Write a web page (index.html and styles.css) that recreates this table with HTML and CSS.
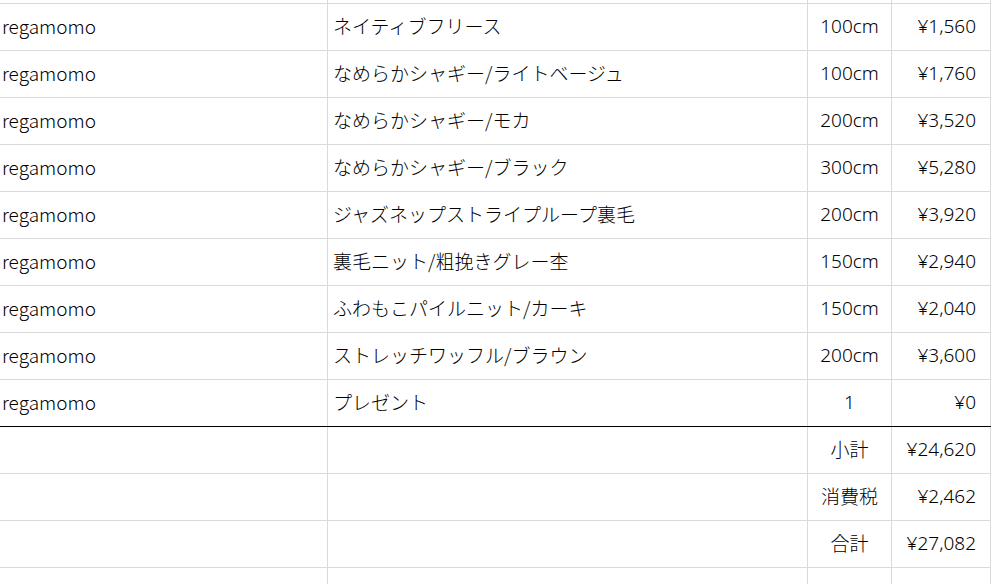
FILE: index.html
```html
<!DOCTYPE html>
<html lang="ja">
<head>
<meta charset="utf-8">
<link rel="stylesheet" href="styles.css">
</head>
<body>
<div class="sheet">
  <div class="row top"><div class="c c1"></div><div class="c c2"></div><div class="c c3"></div><div class="c c4"></div></div>
  <div class="row"><div class="c c1">regamomo</div><div class="c c2">ネイティブフリース</div><div class="c c3">100cm</div><div class="c c4">¥1,560</div></div>
  <div class="row"><div class="c c1">regamomo</div><div class="c c2">なめらかシャギー/ライトベージュ</div><div class="c c3">100cm</div><div class="c c4">¥1,760</div></div>
  <div class="row"><div class="c c1">regamomo</div><div class="c c2">なめらかシャギー/モカ</div><div class="c c3">200cm</div><div class="c c4">¥3,520</div></div>
  <div class="row"><div class="c c1">regamomo</div><div class="c c2">なめらかシャギー/ブラック</div><div class="c c3">300cm</div><div class="c c4">¥5,280</div></div>
  <div class="row"><div class="c c1">regamomo</div><div class="c c2">ジャズネップストライプループ裏毛</div><div class="c c3">200cm</div><div class="c c4">¥3,920</div></div>
  <div class="row"><div class="c c1">regamomo</div><div class="c c2">裏毛ニット/粗挽きグレー杢</div><div class="c c3">150cm</div><div class="c c4">¥2,940</div></div>
  <div class="row"><div class="c c1">regamomo</div><div class="c c2">ふわもこパイルニット/カーキ</div><div class="c c3">150cm</div><div class="c c4">¥2,040</div></div>
  <div class="row"><div class="c c1">regamomo</div><div class="c c2">ストレッチワッフル/ブラウン</div><div class="c c3">200cm</div><div class="c c4">¥3,600</div></div>
  <div class="row last"><div class="c c1">regamomo</div><div class="c c2">プレゼント</div><div class="c c3">1</div><div class="c c4">¥0</div></div>
  <div class="row"><div class="c c1"></div><div class="c c2"></div><div class="c c3">小計</div><div class="c c4">¥24,620</div></div>
  <div class="row"><div class="c c1"></div><div class="c c2"></div><div class="c c3">消費税</div><div class="c c4">¥2,462</div></div>
  <div class="row"><div class="c c1"></div><div class="c c2"></div><div class="c c3">合計</div><div class="c c4">¥27,082</div></div>
  <div class="row end"><div class="c c1"></div><div class="c c2"></div><div class="c c3"></div><div class="c c4"></div></div>
</div>
</body>
</html>
```

FILE: styles.css
```css
html, body {
  margin: 0;
  padding: 0;
  background: #fff;
  overflow: hidden;
}
.sheet {
  width: 991px;
  height: 584px;
  overflow: hidden;
  font-family: "Noto Sans CJK JP", "Noto Sans", sans-serif;
  font-size: 19px;
  font-weight: 300;
  color: #000;
}
.row {
  display: grid;
  grid-template-columns: 328px 480px 84px 99px;
  height: 47px;
  border-bottom: 1px solid #dadada;
  box-sizing: border-box;
}
.row.top {
  height: 4px;
}
.row.end {
  height: 16px;
  border-bottom: none;
}
.row.last {
  border-bottom-color: #000;
}
.c {
  border-right: 1px solid #dadada;
  display: flex;
  align-items: center;
  padding-bottom: 3px;
  white-space: nowrap;
  overflow: hidden;
}
.top .c, .end .c {
  padding-bottom: 0;
}
.c1 {
  padding-left: 2px;
}
.c2 {
  padding-left: 5px;
}
.c3, .c4 {
  font-family: "Noto Sans", "Noto Sans CJK JP", sans-serif;
}
.c3 {
  justify-content: center;
}
.c4 {
  justify-content: flex-end;
  padding-right: 14px;
}
```
